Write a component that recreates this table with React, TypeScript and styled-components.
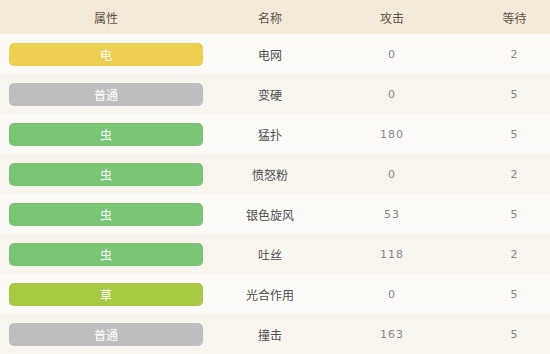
import React from 'react';
import styled, { createGlobalStyle } from 'styled-components';

const GlobalStyle = createGlobalStyle`
  html, body {
    margin: 0;
    padding: 0;
    background: #fcfaf5;
  }
  body {
    font-family: "Noto Sans CJK SC", "Liberation Sans", sans-serif;
    overflow: hidden;
  }
`;

type MoveType = 'electric' | 'normal' | 'bug' | 'grass';

const typeColors: Record<MoveType, string> = {
  electric: '#eecf4f',
  normal: '#bebebe',
  bug: '#78c574',
  grass: '#a8c944',
};

const typeNames: Record<MoveType, string> = {
  electric: '电',
  normal: '普通',
  bug: '虫',
  grass: '草',
};

const moves: { type: MoveType; name: string; power: number; wait: number }[] = [
  { type: 'electric', name: '电网', power: 0, wait: 2 },
  { type: 'normal', name: '变硬', power: 0, wait: 5 },
  { type: 'bug', name: '猛扑', power: 180, wait: 5 },
  { type: 'bug', name: '愤怒粉', power: 0, wait: 2 },
  { type: 'bug', name: '银色旋风', power: 53, wait: 5 },
  { type: 'bug', name: '吐丝', power: 118, wait: 2 },
  { type: 'grass', name: '光合作用', power: 0, wait: 5 },
  { type: 'normal', name: '撞击', power: 163, wait: 5 },
];

const Table = styled.div`
  width: 573px;
  display: flex;
  flex-direction: column;
`;

const Row = styled.div<{ $head?: boolean; $alt?: boolean }>`
  display: grid;
  grid-template-columns: 212px 116px 128px 117px;
  align-items: center;
  height: ${p => (p.$head ? '34px' : '40px')};
  background: ${p => (p.$head ? '#f3eada' : p.$alt ? '#f8f5ee' : '#fdfbf7')};
`;

const HeadCell = styled.div`
  text-align: center;
  font-size: 12px;
  color: #5f5446;
`;

const Cell = styled.div<{ $num?: boolean }>`
  text-align: center;
  font-size: 12px;
  color: ${p => (p.$num ? '#868686' : '#4e4e4e')};
  font-family: ${p => (p.$num ? '"DejaVu Sans", sans-serif' : 'inherit')};
  ${p => p.$num && 'font-size: 11px; letter-spacing: 1px;'}
`;

const BadgeCell = styled.div`
  padding: 0 9px;
`;

const Badge = styled.div<{ $color: string }>`
  height: 23px;
  border-radius: 5px;
  background: ${p => p.$color};
  color: #fff;
  font-size: 12px;
  line-height: 23px;
  text-align: center;
`;

export default function App() {
  return (
    <>
      <GlobalStyle />
      <Table>
        <Row $head>
          <HeadCell>属性</HeadCell>
          <HeadCell>名称</HeadCell>
          <HeadCell>攻击</HeadCell>
          <HeadCell>等待</HeadCell>
        </Row>
        {moves.map((m, i) => (
          <Row key={i} $alt={i % 2 === 1}>
            <BadgeCell>
              <Badge $color={typeColors[m.type]}>{typeNames[m.type]}</Badge>
            </BadgeCell>
            <Cell>{m.name}</Cell>
            <Cell $num>{m.power}</Cell>
            <Cell $num>{m.wait}</Cell>
          </Row>
        ))}
      </Table>
    </>
  );
}
